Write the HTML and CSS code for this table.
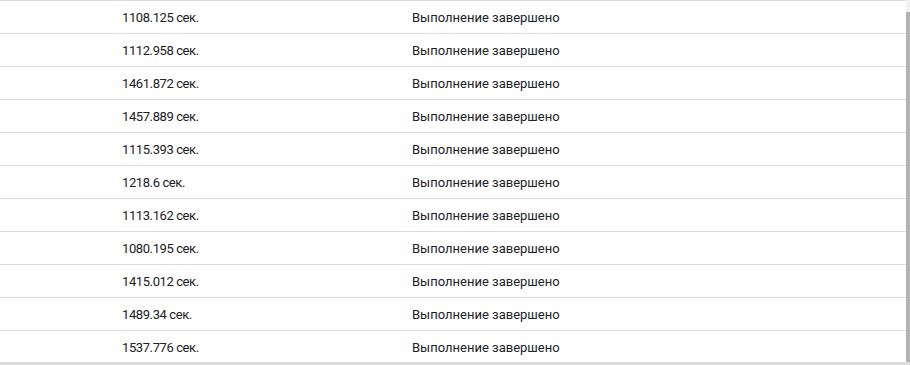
FILE: index.html
```html
<!DOCTYPE html>
<html lang="ru">
<head>
<meta charset="utf-8">
<link rel="stylesheet" href="styles.css">
</head>
<body>
<div class="frame">
  <div class="viewport">
    <div class="table">
      <div class="row"><div class="c1">1108.125 сек.</div><div class="c2">Выполнение завершено</div></div>
      <div class="row"><div class="c1">1112.958 сек.</div><div class="c2">Выполнение завершено</div></div>
      <div class="row"><div class="c1">1461.872 сек.</div><div class="c2">Выполнение завершено</div></div>
      <div class="row"><div class="c1">1457.889 сек.</div><div class="c2">Выполнение завершено</div></div>
      <div class="row"><div class="c1">1115.393 сек.</div><div class="c2">Выполнение завершено</div></div>
      <div class="row"><div class="c1">1218.6 сек.</div><div class="c2">Выполнение завершено</div></div>
      <div class="row"><div class="c1">1113.162 сек.</div><div class="c2">Выполнение завершено</div></div>
      <div class="row"><div class="c1">1080.195 сек.</div><div class="c2">Выполнение завершено</div></div>
      <div class="row"><div class="c1">1415.012 сек.</div><div class="c2">Выполнение завершено</div></div>
      <div class="row"><div class="c1">1489.34 сек.</div><div class="c2">Выполнение завершено</div></div>
      <div class="row"><div class="c1">1537.776 сек.</div><div class="c2">Выполнение завершено</div></div>
    </div>
    <div class="vscroll"><div class="vthumb"></div></div>
  </div>
  <div class="hscroll"></div>
</div>
</body>
</html>
```

FILE: styles.css
```css
html, body {
  margin: 0;
  padding: 0;
  background: #ffffff;
}
body {
  font-family: Roboto, "Noto Sans", Arial, sans-serif;
  font-size: 13px;
  color: #202124;
}
.frame {
  width: 910px;
  height: 365px;
  display: flex;
  flex-direction: column;
  overflow: hidden;
}
.viewport {
  height: 362px;
  display: flex;
  overflow: hidden;
}
.table {
  flex: 1;
  border-top: 1px solid #dadce0;
}
.row {
  height: 32px;
  border-bottom: 1px solid #dadce0;
  display: flex;
  align-items: center;
}
.c1 {
  width: 290px;
  padding-left: 122px;
  box-sizing: content-box;
  letter-spacing: -0.4px;
}
.c2 {
  flex: 1;
}
.vscroll {
  width: 4px;
  display: flex;
  flex-direction: column;
  background: #f1f1f1;
}
.vthumb {
  margin-top: 12px;
  flex: 1;
  background: #b3b3b3;
}
.hscroll {
  height: 3px;
  background: #dcdcdc;
}
```
